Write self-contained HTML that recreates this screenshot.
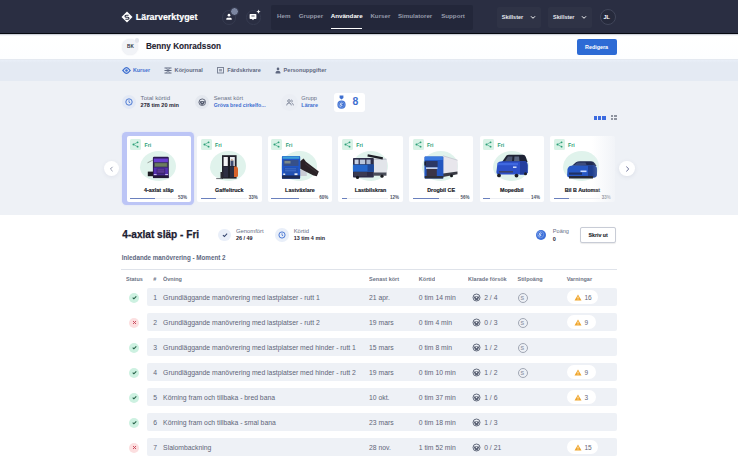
<!DOCTYPE html><html><head><meta charset="utf-8"><style>
*{margin:0;padding:0;box-sizing:border-box}
html,body{width:738px;height:472px;overflow:hidden;background:#fff;font-family:"Liberation Sans",sans-serif}
.ab{position:absolute}
.t{position:absolute;white-space:nowrap;line-height:10px;height:10px}
.b{font-weight:bold}
</style></head><body>
<div class="ab" style="left:0px;top:0px;width:738px;height:33.3px;background:#2a2e42;"></div>
<div class="ab" style="left:0px;top:33px;width:738px;height:1px;background:#070911;"></div>
<svg class="ab" style="left:121px;top:11px" width="12" height="12" viewBox="0 0 12 12"><path d="M6 0.5L11.5 6L6 11.5L0.5 6Z" fill="#fff"/><path d="M7.6 4.3H5.2Q4 4.3 4 5.3T5.2 6.3H6.8Q8 6.3 8 7.3T6.8 8.3H4.4" stroke="#2a2e42" stroke-width="1.1" fill="none"/></svg>
<div class="t b" style="left:135.8px;top:12.20px;font-size:8.9px;color:#fff;-webkit-text-stroke:0.2px #fff">Lärarverktyget</div>
<div class="ab" style="left:221.5px;top:10.2px;width:14.6px;height:14.6px;border-radius:50%;border:1px solid #363b50"></div>
<svg class="ab" style="left:224px;top:12px" width="10" height="10" viewBox="0 0 10 10"><circle cx="5" cy="3.2" r="1.35" fill="#fff"/><path d="M2.3 7.8V6.9Q2.3 5.8 3.6 5.8H6.4Q7.7 5.8 7.7 6.9V7.8Z" fill="#fff"/></svg>
<div class="ab" style="left:230px;top:7px;width:9px;height:9px;border-radius:50%;background:#7b85a0;border:0.6px solid #2a2e42"></div>
<div class="ab" style="left:246.3px;top:10.2px;width:14.6px;height:14.6px;border-radius:50%;border:1px solid #363b50"></div>
<svg class="ab" style="left:248px;top:9px" width="14" height="13" viewBox="0 0 14 13"><path d="M1.6 5.6Q1.6 4.9 2.3 4.9H7.7Q8.4 4.9 8.4 5.6V9.2Q8.4 9.9 7.7 9.9H6L5 11.3 4 9.9H2.3Q1.6 9.9 1.6 9.2Z" fill="#fff"/><path d="M3.4 7h3.2" stroke="#4a4e60" stroke-width="0.9"/><path d="M10.5 0.6Q10.7 2.5 12.6 2.7Q10.7 2.9 10.5 4.8Q10.3 2.9 8.4 2.7Q10.3 2.5 10.5 0.6Z" fill="#fff"/></svg>
<div class="ab" style="left:271px;top:5.4px;width:202.4px;height:24.5px;background:#23273a;border-radius:2px"></div>
<div class="t b" style="left:277px;top:10.80px;font-size:6.2px;color:#969bab;">Hem</div>
<div class="t b" style="left:298.8px;top:10.80px;font-size:6.2px;color:#969bab;">Grupper</div>
<div class="t b" style="left:330.7px;top:10.80px;font-size:6.2px;color:#fff;">Användare</div>
<div class="t b" style="left:370.4px;top:10.80px;font-size:6.2px;color:#969bab;">Kurser</div>
<div class="t b" style="left:397.9px;top:10.80px;font-size:6.2px;color:#969bab;">Simulatorer</div>
<div class="t b" style="left:441.2px;top:10.80px;font-size:6.2px;color:#969bab;">Support</div>
<div class="ab" style="left:330.7px;top:27.8px;width:31.7px;height:1.3px;background:#fff;"></div>
<div class="ab" style="left:496.6px;top:6.6px;width:44.6px;height:21.9px;background:#2f3346;border-radius:2px"></div>
<div class="t b" style="left:501.8px;top:12.20px;font-size:5.5px;color:#e8eaf0;">Skillster</div>
<svg class="ab" style="left:530.1px;top:15px" width="6" height="5" viewBox="0 0 6 5"><path d="M1 1.3L3 3.3L5 1.3" stroke="#fff" stroke-width="1" fill="none"/></svg>
<div class="ab" style="left:547.9px;top:6.6px;width:44.6px;height:21.9px;background:#2f3346;border-radius:2px"></div>
<div class="t b" style="left:553.1px;top:12.20px;font-size:5.5px;color:#e8eaf0;">Skillster</div>
<svg class="ab" style="left:581.4px;top:15px" width="6" height="5" viewBox="0 0 6 5"><path d="M1 1.3L3 3.3L5 1.3" stroke="#fff" stroke-width="1" fill="none"/></svg>
<div class="ab" style="left:600px;top:9px;width:16.2px;height:16.2px;border-radius:50%;border:1px solid #41465a;background:#262a3c"></div>
<div class="t b" style="left:603.4px;top:12.20px;font-size:5.5px;color:#fff;">JL</div>
<div class="ab" style="left:0px;top:34px;width:738px;height:24.6px;background:linear-gradient(180deg,#b9bec8 0,#eef0f4 1.2px,#fff 2.2px,#fdfeff 100%);"></div>
<div class="ab" style="left:122.4px;top:38.6px;width:16px;height:16px;border-radius:50%;background:#f1f3f7;box-shadow:0 0 1.5px rgba(80,90,120,0.15)"></div>
<div class="ab" style="left:134.5px;top:38.3px;width:4.5px;height:4.5px;border-radius:50%;background:#e3e6ec"></div>
<div class="t b" style="left:127.1px;top:42.10px;font-size:4.6px;color:#2e3240;">BK</div>
<div class="t b" style="left:145.9px;top:41.50px;font-size:8.2px;color:#1e2130;-webkit-text-stroke:0.1px #1e2130">Benny Konradsson</div>
<div class="ab" style="left:576.8px;top:38.9px;width:39.8px;height:15.8px;background:#2d6bd5;border-radius:2px"></div>
<div class="t b" style="left:585px;top:41.80px;font-size:5.4px;color:#fff;">Redigera</div>
<div class="ab" style="left:0px;top:58.6px;width:738px;height:22.2px;background:linear-gradient(180deg,#e2e6ed 0,#e8eef7 1.4px,#e4eaf3 4px,#e4eaf3 100%);"></div>
<svg class="ab" style="left:121.8px;top:67px" width="9" height="7" viewBox="0 0 9 7"><path d="M0.8 3.5L3 1.2Q4.5 0.2 6 1.2L8.2 3.5L6 5.8Q4.5 6.8 3 5.8Z" stroke="#3e6fd0" stroke-width="1.2" fill="none"/><circle cx="4.5" cy="3.5" r="1.3" fill="#3e6fd0"/></svg>
<div class="t b" style="left:132.9px;top:65.40px;font-size:5.3px;color:#3e6fd0;">Kurser</div>
<svg class="ab" style="left:164px;top:67.3px" width="8" height="7" viewBox="0 0 8 7"><path d="M0.5 1h7M0.5 3.5h7M0.5 6h7" stroke="#5f6880" stroke-width="1.1"/><path d="M2.5 1.5l3 4M5.5 1.5l-3 4" stroke="#5f6880" stroke-width="0.8"/></svg>
<div class="t b" style="left:174.6px;top:65.40px;font-size:5.6px;color:#5f6880;">Körjournal</div>
<svg class="ab" style="left:217px;top:67.3px" width="7" height="6.5" viewBox="0 0 7 6.5"><rect x="0.5" y="0.5" width="6" height="5.5" stroke="#7d8598" stroke-width="1" fill="none"/><rect x="2" y="2" width="3" height="2.4" fill="#9aa1b1"/></svg>
<div class="t b" style="left:227.3px;top:65.40px;font-size:5.6px;color:#5f6880;">Färdskrivare</div>
<svg class="ab" style="left:274.5px;top:66.8px" width="6" height="7" viewBox="0 0 6 7"><circle cx="3" cy="1.9" r="1.3" fill="#5f6880"/><path d="M0.6 6.6v-1.2q0-1.6 2.4-1.6t2.4 1.6v1.2z" fill="#5f6880"/></svg>
<div class="t b" style="left:283.6px;top:65.40px;font-size:5.56px;color:#5f6880;">Personuppgifter</div>
<div class="ab" style="left:0px;top:80.8px;width:738px;height:134.4px;background:#eef1f6;"></div>
<div class="ab" style="left:121.75px;top:94.85px;width:14.5px;height:14.5px;border-radius:50%;background:#e3e9f5"></div>
<svg class="ab" style="left:125px;top:98.1px" width="8" height="8" viewBox="0 0 8 8"><circle cx="4" cy="4" r="3.2" stroke="#3e6fd0" stroke-width="0.9" fill="none"/><path d="M4 2.2V4.2L5.3 5" stroke="#3e6fd0" stroke-width="0.8" fill="none"/></svg>
<div class="t" style="left:140.6px;top:92.80px;font-size:6.1px;color:#687086;">Total körtid</div>
<div class="t b" style="left:140.6px;top:100.40px;font-size:5.57px;color:#1f2331;">278 tim 20 min</div>
<div class="ab" style="left:194.75px;top:94.85px;width:14.5px;height:14.5px;border-radius:50%;background:#e4e8ef"></div>
<svg class="ab" style="left:197.6px;top:97.9px" width="8.5" height="8.5" viewBox="0 0 9 9"><circle cx="4.5" cy="4.5" r="3.5" stroke="#4f566a" stroke-width="0.9" fill="none"/><path d="M1.4 3.7Q4.5 2.6 7.6 3.7L5.6 6.9Q4.5 7.6 3.4 6.9Z" fill="#4f566a"/><circle cx="4.5" cy="4.6" r="0.75" fill="#e3e7ee"/></svg>
<div class="t" style="left:213.7px;top:92.80px;font-size:5.8px;color:#687086;">Senast kört</div>
<div class="t b" style="left:213.7px;top:100.40px;font-size:5.2px;color:#3e6fd0;">Gröva bred cirkelfo...</div>
<div class="ab" style="left:281.2px;top:93.6px;width:17px;height:17px;border-radius:50%;background:#ebeef4"></div>
<svg class="ab" style="left:285.8px;top:98.6px" width="8" height="7" viewBox="0 0 8 7"><circle cx="3" cy="2" r="1.3" stroke="#6a7288" stroke-width="0.8" fill="none"/><path d="M0.7 6.4q0-2.4 2.3-2.4t2.3 2.4" stroke="#6a7288" stroke-width="0.8" fill="none"/><path d="M5.2 0.9q1.2 0.2 1.2 1.2t-1.2 1.1M6.1 4.1q1.3 0.4 1.3 2.3" stroke="#6a7288" stroke-width="0.7" fill="none"/></svg>
<div class="t" style="left:301.3px;top:93.10px;font-size:5.65px;color:#687086;">Grupp</div>
<div class="t b" style="left:301.3px;top:100.40px;font-size:5.46px;color:#3e6fd0;">Lärare</div>
<div class="ab" style="left:334.1px;top:92.5px;width:31.3px;height:19.3px;background:#fff;border-radius:3px"></div>
<svg class="ab" style="left:337.4px;top:95px" width="9" height="14" viewBox="0 0 9 14"><path d="M2.6 0.4h3.8v2.6l-1.9 1.6-1.9-1.6z" fill="#3e6fd0"/><circle cx="4.5" cy="9.7" r="4.1" fill="#3e6fd0"/><circle cx="4.5" cy="9.7" r="3" stroke="#8fb0ee" stroke-width="0.5" fill="none"/><path d="M5.6 8.6q-1.1-1-2.2 0.1t1.1 1.1q1.2 0.2 0 1.2-1 0.6-2-0.2" stroke="#fff" stroke-width="0.8" fill="none"/></svg>
<div class="t b" style="left:352.6px;top:97.00px;font-size:10.4px;color:#3e6fd0;">8</div>
<div class="ab" style="left:593.5px;top:115.8px;width:3.6px;height:4.1px;background:#3c6be0;"></div>
<div class="ab" style="left:597.8px;top:115.8px;width:3.6px;height:4.1px;background:#3c6be0;"></div>
<div class="ab" style="left:602.1px;top:115.8px;width:3.6px;height:4.1px;background:#3c6be0;"></div>
<div class="ab" style="left:610.5px;top:114.6px;width:2.6px;height:2.5px;background:#8e939f;"></div>
<div class="ab" style="left:610.5px;top:117.89999999999999px;width:2.6px;height:2.5px;background:#8e939f;"></div>
<div class="ab" style="left:614.1px;top:114.6px;width:2.6px;height:2.5px;background:#8e939f;"></div>
<div class="ab" style="left:614.1px;top:117.89999999999999px;width:2.6px;height:2.5px;background:#8e939f;"></div>
<div class="ab" style="left:122.2px;top:132.1px;width:72px;height:73.1px;border-radius:4.5px;background:#bcc5f6;box-shadow:0 0 1.5px rgba(188,197,246,0.6)"></div>
<div class="ab" style="left:126.5px;top:135.6px;width:64.5px;height:66.2px;background:#fff;border-radius:2px"></div>
<div class="ab" style="left:130.1px;top:139.0px;width:11px;height:11.4px;background:#d8f2e6;border-radius:1.5px"></div>
<svg class="ab" style="left:132.1px;top:141.2px" width="7" height="7" viewBox="0 0 7 7"><circle cx="5.6" cy="1.3" r="0.9" fill="#2c9f78"/><circle cx="1.4" cy="3.5" r="0.9" fill="#2c9f78"/><circle cx="5.6" cy="5.7" r="0.9" fill="#2c9f78"/><path d="M5.6 1.3L1.4 3.5L5.6 5.7" stroke="#2c9f78" stroke-width="0.6" fill="none"/></svg>
<div class="t b" style="left:144.5px;top:139.60px;font-size:5.2px;color:#2c9f78;">Fri</div>
<div class="ab" style="left:139.8px;top:151.4px;width:36px;height:30px;border-radius:52% 48% 46% 54% / 55% 50% 50% 45%;background:#e0f3ec"></div>
<svg class="ab" style="left:140px;top:150px" width="36" height="32" viewBox="140 150 36 32">
<path d="M147.5 162.8L152.8 160.2" stroke="#4a4a44" stroke-width="0.5"/>
<rect x="147.8" y="171.6" width="5.2" height="4.6" fill="#1c1a22"/>
<rect x="152.9" y="156.8" width="15.9" height="21.3" rx="1.2" fill="#2b1a52"/>
<rect x="153.8" y="158.5" width="14.1" height="3.8" fill="#6a3fd0"/>
<rect x="154.2" y="162.6" width="13.4" height="4.6" fill="#4d5a5a"/>
<rect x="155" y="163.3" width="11.8" height="3" fill="#6d7d5e"/>
<rect x="153.8" y="167.5" width="14.1" height="7.8" fill="#5530b0"/>
<rect x="156.6" y="168.5" width="8.6" height="6" fill="#3b2470"/>
<rect x="157.4" y="169.6" width="7" height="0.7" fill="#8a5ac8"/>
<rect x="157.4" y="171.6" width="7" height="0.7" fill="#8a5ac8"/>
<rect x="153.8" y="174" width="2.8" height="1.2" fill="#c9b8f0"/>
<rect x="165.2" y="174" width="2.8" height="1.2" fill="#c9b8f0"/>
<rect x="153.2" y="175.6" width="15.4" height="2.5" fill="#231a36"/>
</svg>
<div class="t b" style="left:126.5px;width:64.5px;text-align:center;top:185.4px;font-size:5.4px;color:#15171f;-webkit-text-stroke:0.15px #15171f">4-axlat släp</div>
<div class="ab" style="left:130.1px;top:197.6px;width:46.5px;height:1.2px;background:#eceef3;"></div>
<div class="ab" style="left:130.1px;top:197.6px;width:24.645px;height:1.2px;background:#6a80bd;"></div>
<div class="t b" style="left:178.1px;top:193.20px;font-size:4.5px;color:#4d5466;">53%</div>
<div class="ab" style="left:197.1px;top:135.6px;width:64.5px;height:66.2px;background:#fff;border-radius:2px"></div>
<div class="ab" style="left:200.7px;top:139.0px;width:11px;height:11.4px;background:#d8f2e6;border-radius:1.5px"></div>
<svg class="ab" style="left:202.7px;top:141.2px" width="7" height="7" viewBox="0 0 7 7"><circle cx="5.6" cy="1.3" r="0.9" fill="#2c9f78"/><circle cx="1.4" cy="3.5" r="0.9" fill="#2c9f78"/><circle cx="5.6" cy="5.7" r="0.9" fill="#2c9f78"/><path d="M5.6 1.3L1.4 3.5L5.6 5.7" stroke="#2c9f78" stroke-width="0.6" fill="none"/></svg>
<div class="t b" style="left:215.1px;top:139.60px;font-size:5.2px;color:#2c9f78;">Fri</div>
<div class="ab" style="left:210.4px;top:151.4px;width:36px;height:30px;border-radius:52% 48% 46% 54% / 55% 50% 50% 45%;background:#e0f3ec"></div>
<svg class="ab" style="left:210px;top:150px" width="36" height="32" viewBox="210 150 36 32">
<path d="M216.2 178.6H223" stroke="#4d4f58" stroke-width="0.8"/>
<rect x="222" y="155.2" width="14.6" height="23.4" fill="#22222c"/>
<rect x="223.6" y="157" width="4.2" height="9" fill="#f3f4f6"/>
<rect x="230" y="157" width="4.8" height="9" fill="#e9ecf0"/>
<rect x="230.5" y="160.5" width="3" height="5.5" fill="#3d4a70"/>
<rect x="231" y="159" width="1.8" height="1.8" rx="0.9" fill="#c7a58a"/>
<rect x="223.4" y="166.6" width="11" height="10.6" fill="#2c2e42"/>
<rect x="228.2" y="156" width="1.6" height="22" fill="#1a1b22"/>
<path d="M234 166.5H236.5Q238 167 238 169V175.5Q238 177 236.5 177H234Z" fill="#d8642c"/>
<rect x="220.5" y="172" width="2" height="6.4" fill="#2a2b33"/>
</svg>
<div class="t b" style="left:197.1px;width:64.5px;text-align:center;top:185.4px;font-size:5.4px;color:#15171f;-webkit-text-stroke:0.15px #15171f">Gaffeltruck</div>
<div class="ab" style="left:200.7px;top:197.6px;width:46.5px;height:1.2px;background:#eceef3;"></div>
<div class="ab" style="left:200.7px;top:197.6px;width:15.345px;height:1.2px;background:#6a80bd;"></div>
<div class="t b" style="left:248.7px;top:193.20px;font-size:4.5px;color:#4d5466;">33%</div>
<div class="ab" style="left:267.7px;top:135.6px;width:64.5px;height:66.2px;background:#fff;border-radius:2px"></div>
<div class="ab" style="left:271.3px;top:139.0px;width:11px;height:11.4px;background:#d8f2e6;border-radius:1.5px"></div>
<svg class="ab" style="left:273.3px;top:141.2px" width="7" height="7" viewBox="0 0 7 7"><circle cx="5.6" cy="1.3" r="0.9" fill="#2c9f78"/><circle cx="1.4" cy="3.5" r="0.9" fill="#2c9f78"/><circle cx="5.6" cy="5.7" r="0.9" fill="#2c9f78"/><path d="M5.6 1.3L1.4 3.5L5.6 5.7" stroke="#2c9f78" stroke-width="0.6" fill="none"/></svg>
<div class="t b" style="left:285.7px;top:139.60px;font-size:5.2px;color:#2c9f78;">Fri</div>
<div class="ab" style="left:281.0px;top:151.4px;width:36px;height:30px;border-radius:52% 48% 46% 54% / 55% 50% 50% 45%;background:#e0f3ec"></div>
<svg class="ab" style="left:278px;top:150px" width="44" height="32" viewBox="278 150 44 32">
<rect x="299.8" y="170" width="7" height="6" fill="#c9ccd4"/>
<path d="M300.2 161.2L303.6 158.4L306 161.8L318.8 171.4L316.8 176.2L313.5 175.6L300.2 168.8Z" fill="#2a2226"/>
<path d="M305 163.5L317 172.5" stroke="#4a4246" stroke-width="0.5"/>
<rect x="281.9" y="156.1" width="18.3" height="22.6" rx="1" fill="#1f56c8"/>
<rect x="282.6" y="156.4" width="16.8" height="2.4" fill="#3fa0d8"/>
<rect x="283.5" y="160" width="15" height="6" fill="#36508a"/>
<rect x="284.5" y="161" width="6" height="2.5" fill="#7c8a8a"/>
<rect x="284" y="167.3" width="14" height="7.2" fill="#2352b0"/>
<rect x="285" y="168.5" width="11" height="0.7" fill="#4f7bd0"/>
<rect x="285" y="170.5" width="11" height="0.7" fill="#4f7bd0"/>
<rect x="282" y="175.4" width="18" height="3.3" fill="#1d2a52"/>
<rect x="294.5" y="173.3" width="3" height="1.8" fill="#e9eef8"/>
<rect x="283.2" y="173.5" width="2" height="1.5" fill="#e9eef8"/>
</svg>
<div class="t b" style="left:267.7px;width:64.5px;text-align:center;top:185.4px;font-size:5.4px;color:#15171f;-webkit-text-stroke:0.15px #15171f">Lastväxlare</div>
<div class="ab" style="left:271.3px;top:197.6px;width:46.5px;height:1.2px;background:#eceef3;"></div>
<div class="ab" style="left:271.3px;top:197.6px;width:27.9px;height:1.2px;background:#6a80bd;"></div>
<div class="t b" style="left:319.3px;top:193.20px;font-size:4.5px;color:#4d5466;">60%</div>
<div class="ab" style="left:338.29999999999995px;top:135.6px;width:64.5px;height:66.2px;background:#fff;border-radius:2px"></div>
<div class="ab" style="left:341.9px;top:139.0px;width:11px;height:11.4px;background:#d8f2e6;border-radius:1.5px"></div>
<svg class="ab" style="left:343.9px;top:141.2px" width="7" height="7" viewBox="0 0 7 7"><circle cx="5.6" cy="1.3" r="0.9" fill="#2c9f78"/><circle cx="1.4" cy="3.5" r="0.9" fill="#2c9f78"/><circle cx="5.6" cy="5.7" r="0.9" fill="#2c9f78"/><path d="M5.6 1.3L1.4 3.5L5.6 5.7" stroke="#2c9f78" stroke-width="0.6" fill="none"/></svg>
<div class="t b" style="left:356.29999999999995px;top:139.60px;font-size:5.2px;color:#2c9f78;">Fri</div>
<div class="ab" style="left:351.59999999999997px;top:151.4px;width:36px;height:30px;border-radius:52% 48% 46% 54% / 55% 50% 50% 45%;background:#e0f3ec"></div>
<svg class="ab" style="left:350px;top:150px" width="40" height="32" viewBox="350 150 40 32">
<path d="M373.5 158.5H386Q387 159 387 160.5V173H373.5Z" fill="#e2e5ea"/>
<path d="M373.5 159.2H386.5" stroke="#9aa0ac" stroke-width="0.6"/>
<rect x="373.5" y="172.5" width="13" height="3.2" fill="#4a4e5a"/>
<circle cx="382" cy="176.2" r="1.6" fill="#1a1b20"/>
<path d="M367.6 155.4L382.8 158.4" stroke="#1d1f26" stroke-width="2.1"/>
<rect x="353" y="158.1" width="20.8" height="19.4" rx="0.8" fill="#2c2d48"/>
<rect x="354.6" y="159.6" width="4" height="4.6" fill="#c8d2e4"/>
<rect x="359.8" y="159.6" width="5.4" height="4.6" fill="#b9c5dc"/>
<rect x="366.4" y="159.6" width="4.2" height="4.6" fill="#aab6d0"/>
<rect x="353" y="164.6" width="20.8" height="7.1" fill="#2668cc"/>
<rect x="367.5" y="164.6" width="6.3" height="7.1" fill="#1f4a9a"/>
<rect x="354" y="172" width="13" height="4" fill="#3a3b52"/>
<circle cx="357.5" cy="177.4" r="1.6" fill="#17181d"/>
</svg>
<div class="t b" style="left:338.29999999999995px;width:64.5px;text-align:center;top:185.4px;font-size:5.4px;color:#15171f;-webkit-text-stroke:0.15px #15171f">Lastbilskran</div>
<div class="ab" style="left:341.9px;top:197.6px;width:46.5px;height:1.2px;background:#eceef3;"></div>
<div class="ab" style="left:341.9px;top:197.6px;width:5.58px;height:1.2px;background:#6a80bd;"></div>
<div class="t b" style="left:389.9px;top:193.20px;font-size:4.5px;color:#4d5466;">12%</div>
<div class="ab" style="left:408.9px;top:135.6px;width:64.5px;height:66.2px;background:#fff;border-radius:2px"></div>
<div class="ab" style="left:412.5px;top:139.0px;width:11px;height:11.4px;background:#d8f2e6;border-radius:1.5px"></div>
<svg class="ab" style="left:414.5px;top:141.2px" width="7" height="7" viewBox="0 0 7 7"><circle cx="5.6" cy="1.3" r="0.9" fill="#2c9f78"/><circle cx="1.4" cy="3.5" r="0.9" fill="#2c9f78"/><circle cx="5.6" cy="5.7" r="0.9" fill="#2c9f78"/><path d="M5.6 1.3L1.4 3.5L5.6 5.7" stroke="#2c9f78" stroke-width="0.6" fill="none"/></svg>
<div class="t b" style="left:426.9px;top:139.60px;font-size:5.2px;color:#2c9f78;">Fri</div>
<div class="ab" style="left:422.2px;top:151.4px;width:36px;height:30px;border-radius:52% 48% 46% 54% / 55% 50% 50% 45%;background:#e0f3ec"></div>
<svg class="ab" style="left:420px;top:150px" width="42" height="32" viewBox="420 150 42 32">
<path d="M443 155.6L457.5 160V171.6L443 173.6Z" fill="#e8e6ec"/>
<path d="M443 155.8L457.5 160.2" stroke="#bfc3cd" stroke-width="0.7"/>
<path d="M443 173.6L457.5 171.6V174.3L443 177Z" fill="#3a3b45"/>
<circle cx="451.5" cy="175.8" r="1.5" fill="#16171c"/>
<rect x="424.4" y="156.4" width="19" height="22.1" rx="1" fill="#2356c0"/>
<rect x="425" y="156.6" width="17.8" height="3.4" fill="#3a7ae0"/>
<rect x="425.6" y="161" width="12" height="6" fill="#2c3764"/>
<rect x="426" y="167.4" width="11.5" height="1.5" fill="#d8dce8"/>
<rect x="426.6" y="169" width="10.2" height="7" fill="#3a3446"/>
<rect x="424.8" y="176" width="18.4" height="2.5" fill="#2c2f3a"/>
<rect x="424.4" y="161.5" width="1.6" height="4" fill="#1c2230"/>
</svg>
<div class="t b" style="left:408.9px;width:64.5px;text-align:center;top:185.4px;font-size:5.4px;color:#15171f;-webkit-text-stroke:0.15px #15171f">Drogbil CE</div>
<div class="ab" style="left:412.5px;top:197.6px;width:46.5px;height:1.2px;background:#eceef3;"></div>
<div class="ab" style="left:412.5px;top:197.6px;width:26.040000000000003px;height:1.2px;background:#6a80bd;"></div>
<div class="t b" style="left:460.5px;top:193.20px;font-size:4.5px;color:#4d5466;">56%</div>
<div class="ab" style="left:479.5px;top:135.6px;width:64.5px;height:66.2px;background:#fff;border-radius:2px"></div>
<div class="ab" style="left:483.1px;top:139.0px;width:11px;height:11.4px;background:#d8f2e6;border-radius:1.5px"></div>
<svg class="ab" style="left:485.1px;top:141.2px" width="7" height="7" viewBox="0 0 7 7"><circle cx="5.6" cy="1.3" r="0.9" fill="#2c9f78"/><circle cx="1.4" cy="3.5" r="0.9" fill="#2c9f78"/><circle cx="5.6" cy="5.7" r="0.9" fill="#2c9f78"/><path d="M5.6 1.3L1.4 3.5L5.6 5.7" stroke="#2c9f78" stroke-width="0.6" fill="none"/></svg>
<div class="t b" style="left:497.5px;top:139.60px;font-size:5.2px;color:#2c9f78;">Fri</div>
<div class="ab" style="left:492.8px;top:151.4px;width:36px;height:30px;border-radius:52% 48% 46% 54% / 55% 50% 50% 45%;background:#e0f3ec"></div>
<svg class="ab" style="left:492px;top:150px" width="40" height="32" viewBox="492 150 40 32">
<path d="M502 162L506.5 155.6Q507.3 154.7 509 154.7H523Q525 154.7 525.8 157L527.5 162Z" fill="#1f2335"/>
<path d="M505 161.2L508 156.6H512.5L512 161.2Z" fill="#4a5570"/>
<path d="M514 161.2L514.5 156.6H519L519.5 161.2Z" fill="#5a6680"/>
<path d="M497.5 163Q499 161.3 502 161.3H525.5Q527.6 162 527.6 165V172.5Q527.3 174.5 525 174.5H499Q496.4 174.5 496.4 172Z" fill="#2c50c8"/>
<path d="M520 161.5H525.5Q527.6 162 527.6 165V172.5Q527.3 174.5 525 174.5H520Z" fill="#233f9e"/>
<rect x="498" y="163" width="20" height="2.2" fill="#3f68e0"/>
<rect x="513" y="166.5" width="3.5" height="1.4" fill="#dfe8ff"/>
<rect x="499" y="171" width="14" height="1.6" fill="#3c4468"/>
<circle cx="499" cy="175.4" r="1.9" fill="#1d1f27"/>
<circle cx="516.5" cy="175.6" r="1.9" fill="#1d1f27"/>
<circle cx="525.5" cy="173.8" r="1.5" fill="#1d1f27"/>
</svg>
<div class="t b" style="left:479.5px;width:64.5px;text-align:center;top:185.4px;font-size:5.4px;color:#15171f;-webkit-text-stroke:0.15px #15171f">Mopedbil</div>
<div class="ab" style="left:483.1px;top:197.6px;width:46.5px;height:1.2px;background:#eceef3;"></div>
<div class="ab" style="left:483.1px;top:197.6px;width:6.510000000000001px;height:1.2px;background:#6a80bd;"></div>
<div class="t b" style="left:531.1px;top:193.20px;font-size:4.5px;color:#4d5466;">14%</div>
<div class="ab" style="left:550.0999999999999px;top:135.6px;width:64.5px;height:66.2px;background:#fff;border-radius:2px"></div>
<div class="ab" style="left:553.6999999999999px;top:139.0px;width:11px;height:11.4px;background:#d8f2e6;border-radius:1.5px"></div>
<svg class="ab" style="left:555.6999999999999px;top:141.2px" width="7" height="7" viewBox="0 0 7 7"><circle cx="5.6" cy="1.3" r="0.9" fill="#2c9f78"/><circle cx="1.4" cy="3.5" r="0.9" fill="#2c9f78"/><circle cx="5.6" cy="5.7" r="0.9" fill="#2c9f78"/><path d="M5.6 1.3L1.4 3.5L5.6 5.7" stroke="#2c9f78" stroke-width="0.6" fill="none"/></svg>
<div class="t b" style="left:568.0999999999999px;top:139.60px;font-size:5.2px;color:#2c9f78;">Fri</div>
<div class="ab" style="left:563.3999999999999px;top:151.4px;width:36px;height:30px;border-radius:52% 48% 46% 54% / 55% 50% 50% 45%;background:#e0f3ec"></div>
<svg class="ab" style="left:562px;top:150px" width="40" height="32" viewBox="562 150 40 32">
<path d="M572 165.8L576 162.2Q577.5 161.2 580 161.2H591Q593.6 161.2 595 163.5L596.5 166Z" fill="#1f2a52"/>
<path d="M574.5 165L577.2 162.4H585.5L586.6 165Z" fill="#3d4c7c"/>
<path d="M567.5 169Q568.5 165.6 573 165.6H594Q596.9 166.2 596.9 169.5V175Q596.6 177.5 594 177.5H570Q567.1 177.5 567.1 175Z" fill="#2758c4"/>
<path d="M588 165.8H594Q596.9 166.2 596.9 169.5V175Q596.6 177.5 594 177.5H588Z" fill="#1f3f90"/>
<rect x="580.5" y="170.5" width="6" height="1.6" fill="#c9dcff"/>
<rect x="569" y="172.5" width="13" height="2.2" fill="#1f3266"/>
<rect x="569" y="176" width="24" height="2.5" fill="#272a36"/>
</svg>
<div class="t b" style="left:550.0999999999999px;width:64.5px;text-align:center;top:185.4px;font-size:5.4px;color:#15171f;-webkit-text-stroke:0.15px #15171f">Bil B Automat</div>
<div class="ab" style="left:553.6999999999999px;top:197.6px;width:46.5px;height:1.2px;background:#eceef3;"></div>
<div class="ab" style="left:553.6999999999999px;top:197.6px;width:15.345px;height:1.2px;background:#6a80bd;"></div>
<div class="t b" style="left:601.6999999999999px;top:193.20px;font-size:4.5px;color:#4d5466;">33%</div>
<div class="ab" style="left:104px;top:161px;width:15.4px;height:15.4px;border-radius:50%;background:#fff;box-shadow:0 1px 4px rgba(60,70,110,0.08)"></div>
<svg class="ab" style="left:109.2px;top:165.7px" width="5" height="6" viewBox="0 0 5 6"><path d="M3.6 0.8L1.4 3L3.6 5.2" stroke="#8a8fa6" stroke-width="0.9" fill="none"/></svg>
<div class="ab" style="left:592px;top:130px;width:30px;height:80px;background:linear-gradient(90deg,rgba(238,241,246,0),rgba(238,241,246,0.75) 70%,#eef1f6)"></div>
<div class="ab" style="left:619.2px;top:160.8px;width:15.6px;height:15.6px;border-radius:50%;background:#fff;box-shadow:0 1px 4px rgba(60,70,110,0.10)"></div>
<svg class="ab" style="left:624.5px;top:165.6px" width="5" height="6" viewBox="0 0 5 6"><path d="M1.3 0.6L3.8 3L1.3 5.4" stroke="#6a6f96" stroke-width="1" fill="none"/></svg>
<div class="t b" style="left:122.3px;top:230.40px;font-size:10.1px;color:#1d2030;-webkit-text-stroke:0.25px #1d2030">4-axlat släp - Fri</div>
<div class="ab" style="left:218.3px;top:228.8px;width:12.4px;height:12.4px;border-radius:50%;background:#e9eff9"></div>
<svg class="ab" style="left:221.5px;top:232px" width="6" height="6" viewBox="0 0 6 6"><path d="M0.9 3.1L2.4 4.5L5.1 1.6" stroke="#34456e" stroke-width="1.05" fill="none"/></svg>
<div class="t" style="left:236px;top:226.00px;font-size:5.86px;color:#687086;">Genomfört</div>
<div class="t b" style="left:236px;top:233.30px;font-size:5.42px;color:#1f2331;">26 / 49</div>
<div class="ab" style="left:275.2px;top:228.2px;width:13.6px;height:13.6px;border-radius:50%;background:#e9eff9"></div>
<svg class="ab" style="left:278px;top:231px" width="8" height="8" viewBox="0 0 8 8"><circle cx="4" cy="4" r="3.1" stroke="#3e6fd0" stroke-width="0.9" fill="none"/><path d="M4 2.3V4.2L5.2 5" stroke="#3e6fd0" stroke-width="0.8" fill="none"/></svg>
<div class="t" style="left:293.7px;top:226.00px;font-size:5.9px;color:#687086;">Körtid</div>
<div class="t b" style="left:293.7px;top:233.30px;font-size:5.43px;color:#1f2331;">13 tim 4 min</div>
<div class="ab" style="left:535.6px;top:229.8px;width:10.2px;height:10.2px;border-radius:50%;background:#3d6fd8"></div>
<svg class="ab" style="left:536.2px;top:230.4px" width="9" height="9" viewBox="0 0 9 9"><circle cx="4.5" cy="4.5" r="3.2" stroke="#9dbaf0" stroke-width="0.5" fill="none"/><path d="M5.6 3.4q-1.1-1-2.2 0.1t1.1 1.1q1.2 0.2 0 1.2-1 0.6-2-0.2" stroke="#fff" stroke-width="0.8" fill="none"/></svg>
<div class="t" style="left:552.8px;top:226.20px;font-size:5.6px;color:#687086;">Poäng</div>
<div class="t b" style="left:552.8px;top:233.50px;font-size:5.5px;color:#1f2331;">0</div>
<div class="ab" style="left:579.9px;top:227.4px;width:36.6px;height:15.6px;border-radius:2px;background:#fff;border:0.8px solid #c8ccd6;box-shadow:0 0.5px 1px rgba(0,0,0,0.08)"></div>
<div class="t b" style="left:588.4px;top:230.20px;font-size:5.32px;color:#1c1f2b;-webkit-text-stroke:0.12px #1c1f2b">Skriv ut</div>
<div class="t b" style="left:121.8px;top:252.80px;font-size:6.27px;color:#5d6780;">Inledande manövrering - Moment 2</div>
<div class="ab" style="left:120.7px;top:269px;width:496px;height:0.9px;background:#dfe3ea;"></div>
<div class="t b" style="left:126px;top:273.90px;font-size:5.5px;color:#61687a;opacity:0.92">Status</div>
<div class="t b" style="left:153.2px;top:273.90px;font-size:5.5px;color:#61687a;opacity:0.92">#</div>
<div class="t b" style="left:163px;top:273.90px;font-size:5.5px;color:#61687a;opacity:0.92">Övning</div>
<div class="t b" style="left:369.1px;top:273.90px;font-size:5.5px;color:#61687a;opacity:0.92">Senast kört</div>
<div class="t b" style="left:418.8px;top:273.90px;font-size:5.5px;color:#61687a;opacity:0.92">Körtid</div>
<div class="t b" style="left:468.1px;top:273.90px;font-size:5.5px;color:#61687a;opacity:0.92">Klarade försök</div>
<div class="t b" style="left:517.6px;top:273.90px;font-size:5.5px;color:#61687a;opacity:0.92">Stilpoäng</div>
<div class="t b" style="left:566.7px;top:273.90px;font-size:5.5px;color:#61687a;opacity:0.92">Varningar</div>
<div class="ab" style="left:146.7px;top:288.2px;width:470px;height:17.5px;background:#eef1f6;border-radius:2px"></div>
<div class="ab" style="left:129.3px;top:292.49999999999994px;width:10.2px;height:10.2px;border-radius:50%;background:#cdf1e1"></div>
<svg class="ab" style="left:131.9px;top:295.09999999999997px" width="5" height="5" viewBox="0 0 5 5"><path d="M0.7 2.6L1.9 3.8L4.3 1.3" stroke="#215c43" stroke-width="1.05" fill="none"/></svg>
<div class="t" style="left:153.3px;top:292.60px;font-size:6.8px;color:#5f6679;">1</div>
<div class="t" style="left:163.1px;top:292.60px;font-size:6.83px;color:#5f6679;">Grundläggande manövrering med lastplatser - rutt 1</div>
<div class="t" style="left:369.1px;top:292.60px;font-size:6.8px;color:#5f6679;">21 apr.</div>
<div class="t" style="left:418.8px;top:292.60px;font-size:6.8px;color:#5f6679;">0 tim 14 min</div>
<svg class="ab" style="left:471.6px;top:293.09999999999997px" width="9" height="9" viewBox="0 0 9 9"><circle cx="4.5" cy="4.5" r="3.5" stroke="#565d70" stroke-width="0.9" fill="none"/><path d="M1.4 3.7Q4.5 2.6 7.6 3.7L5.6 6.9Q4.5 7.6 3.4 6.9Z" fill="#565d70"/><circle cx="4.5" cy="4.6" r="0.75" fill="#eef1f6"/></svg>
<div class="t" style="left:484.2px;top:292.60px;font-size:6.8px;color:#5f6679;">2 / 4</div>
<div class="ab" style="left:517.7px;top:292.59999999999997px;width:10px;height:10px;border-radius:50%;border:0.9px solid #a0a6b3"></div>
<div class="t b" style="left:520.6px;top:292.60px;font-size:5.4px;color:#959bab;">S</div>
<div class="ab" style="left:567.1px;top:290.2px;width:31px;height:13.8px;border-radius:7px;background:#fff"></div>
<svg class="ab" style="left:574px;top:293.79999999999995px" width="8" height="7" viewBox="0 0 8 7"><path d="M4 0.6L7.5 6.5H0.5Z" fill="#f0a52a"/><path d="M4 2.6v2" stroke="#fff" stroke-width="0.8"/><circle cx="4" cy="5.5" r="0.4" fill="#fff"/></svg>
<div class="t" style="left:584.4px;top:292.60px;font-size:6.5px;color:#5f6679;">16</div>
<div class="ab" style="left:146.7px;top:313.2px;width:470px;height:17.5px;background:#eef1f6;border-radius:2px"></div>
<div class="ab" style="left:129.3px;top:317.49999999999994px;width:10.2px;height:10.2px;border-radius:50%;background:#fcdfe0"></div>
<svg class="ab" style="left:131.9px;top:320.09999999999997px" width="5" height="5" viewBox="0 0 5 5"><path d="M1 1L4 4M4 1L1 4" stroke="#c84459" stroke-width="0.95" fill="none"/></svg>
<div class="t" style="left:153.3px;top:317.60px;font-size:6.8px;color:#5f6679;">2</div>
<div class="t" style="left:163.1px;top:317.60px;font-size:6.83px;color:#5f6679;">Grundläggande manövrering med lastplatser - rutt 2</div>
<div class="t" style="left:369.1px;top:317.60px;font-size:6.8px;color:#5f6679;">19 mars</div>
<div class="t" style="left:418.8px;top:317.60px;font-size:6.8px;color:#5f6679;">0 tim 4 min</div>
<svg class="ab" style="left:471.6px;top:318.09999999999997px" width="9" height="9" viewBox="0 0 9 9"><circle cx="4.5" cy="4.5" r="3.5" stroke="#565d70" stroke-width="0.9" fill="none"/><path d="M1.4 3.7Q4.5 2.6 7.6 3.7L5.6 6.9Q4.5 7.6 3.4 6.9Z" fill="#565d70"/><circle cx="4.5" cy="4.6" r="0.75" fill="#eef1f6"/></svg>
<div class="t" style="left:484.2px;top:317.60px;font-size:6.8px;color:#5f6679;">0 / 3</div>
<div class="ab" style="left:517.7px;top:317.59999999999997px;width:10px;height:10px;border-radius:50%;border:0.9px solid #a0a6b3"></div>
<div class="t b" style="left:520.6px;top:317.60px;font-size:5.4px;color:#959bab;">S</div>
<div class="ab" style="left:567.1px;top:315.2px;width:28.6px;height:13.8px;border-radius:7px;background:#fff"></div>
<svg class="ab" style="left:574px;top:318.79999999999995px" width="8" height="7" viewBox="0 0 8 7"><path d="M4 0.6L7.5 6.5H0.5Z" fill="#f0a52a"/><path d="M4 2.6v2" stroke="#fff" stroke-width="0.8"/><circle cx="4" cy="5.5" r="0.4" fill="#fff"/></svg>
<div class="t" style="left:584.4px;top:317.60px;font-size:6.5px;color:#5f6679;">9</div>
<div class="ab" style="left:146.7px;top:338.2px;width:470px;height:17.5px;background:#eef1f6;border-radius:2px"></div>
<div class="ab" style="left:129.3px;top:342.49999999999994px;width:10.2px;height:10.2px;border-radius:50%;background:#cdf1e1"></div>
<svg class="ab" style="left:131.9px;top:345.09999999999997px" width="5" height="5" viewBox="0 0 5 5"><path d="M0.7 2.6L1.9 3.8L4.3 1.3" stroke="#215c43" stroke-width="1.05" fill="none"/></svg>
<div class="t" style="left:153.3px;top:342.60px;font-size:6.8px;color:#5f6679;">3</div>
<div class="t" style="left:163.1px;top:342.60px;font-size:6.83px;color:#5f6679;">Grundläggande manövrering med lastplatser med hinder - rutt 1</div>
<div class="t" style="left:369.1px;top:342.60px;font-size:6.8px;color:#5f6679;">15 mars</div>
<div class="t" style="left:418.8px;top:342.60px;font-size:6.8px;color:#5f6679;">0 tim 8 min</div>
<svg class="ab" style="left:471.6px;top:343.09999999999997px" width="9" height="9" viewBox="0 0 9 9"><circle cx="4.5" cy="4.5" r="3.5" stroke="#565d70" stroke-width="0.9" fill="none"/><path d="M1.4 3.7Q4.5 2.6 7.6 3.7L5.6 6.9Q4.5 7.6 3.4 6.9Z" fill="#565d70"/><circle cx="4.5" cy="4.6" r="0.75" fill="#eef1f6"/></svg>
<div class="t" style="left:484.2px;top:342.60px;font-size:6.8px;color:#5f6679;">1 / 2</div>
<div class="ab" style="left:517.7px;top:342.59999999999997px;width:10px;height:10px;border-radius:50%;border:0.9px solid #a0a6b3"></div>
<div class="t b" style="left:520.6px;top:342.60px;font-size:5.4px;color:#959bab;">S</div>
<div class="ab" style="left:146.7px;top:363.2px;width:470px;height:17.5px;background:#eef1f6;border-radius:2px"></div>
<div class="ab" style="left:129.3px;top:367.49999999999994px;width:10.2px;height:10.2px;border-radius:50%;background:#cdf1e1"></div>
<svg class="ab" style="left:131.9px;top:370.09999999999997px" width="5" height="5" viewBox="0 0 5 5"><path d="M0.7 2.6L1.9 3.8L4.3 1.3" stroke="#215c43" stroke-width="1.05" fill="none"/></svg>
<div class="t" style="left:153.3px;top:367.60px;font-size:6.8px;color:#5f6679;">4</div>
<div class="t" style="left:163.1px;top:367.60px;font-size:6.83px;color:#5f6679;">Grundläggande manövrering med lastplatser med hinder - rutt 2</div>
<div class="t" style="left:369.1px;top:367.60px;font-size:6.8px;color:#5f6679;">19 mars</div>
<div class="t" style="left:418.8px;top:367.60px;font-size:6.8px;color:#5f6679;">0 tim 10 min</div>
<svg class="ab" style="left:471.6px;top:368.09999999999997px" width="9" height="9" viewBox="0 0 9 9"><circle cx="4.5" cy="4.5" r="3.5" stroke="#565d70" stroke-width="0.9" fill="none"/><path d="M1.4 3.7Q4.5 2.6 7.6 3.7L5.6 6.9Q4.5 7.6 3.4 6.9Z" fill="#565d70"/><circle cx="4.5" cy="4.6" r="0.75" fill="#eef1f6"/></svg>
<div class="t" style="left:484.2px;top:367.60px;font-size:6.8px;color:#5f6679;">1 / 2</div>
<div class="ab" style="left:517.7px;top:367.59999999999997px;width:10px;height:10px;border-radius:50%;border:0.9px solid #a0a6b3"></div>
<div class="t b" style="left:520.6px;top:367.60px;font-size:5.4px;color:#959bab;">S</div>
<div class="ab" style="left:567.1px;top:365.2px;width:28.6px;height:13.8px;border-radius:7px;background:#fff"></div>
<svg class="ab" style="left:574px;top:368.79999999999995px" width="8" height="7" viewBox="0 0 8 7"><path d="M4 0.6L7.5 6.5H0.5Z" fill="#f0a52a"/><path d="M4 2.6v2" stroke="#fff" stroke-width="0.8"/><circle cx="4" cy="5.5" r="0.4" fill="#fff"/></svg>
<div class="t" style="left:584.4px;top:367.60px;font-size:6.5px;color:#5f6679;">9</div>
<div class="ab" style="left:146.7px;top:388.2px;width:470px;height:17.5px;background:#eef1f6;border-radius:2px"></div>
<div class="ab" style="left:129.3px;top:392.49999999999994px;width:10.2px;height:10.2px;border-radius:50%;background:#cdf1e1"></div>
<svg class="ab" style="left:131.9px;top:395.09999999999997px" width="5" height="5" viewBox="0 0 5 5"><path d="M0.7 2.6L1.9 3.8L4.3 1.3" stroke="#215c43" stroke-width="1.05" fill="none"/></svg>
<div class="t" style="left:153.3px;top:392.60px;font-size:6.8px;color:#5f6679;">5</div>
<div class="t" style="left:163.1px;top:392.60px;font-size:6.83px;color:#5f6679;">Körning fram och tillbaka - bred bana</div>
<div class="t" style="left:369.1px;top:392.60px;font-size:6.8px;color:#5f6679;">10 okt.</div>
<div class="t" style="left:418.8px;top:392.60px;font-size:6.8px;color:#5f6679;">0 tim 37 min</div>
<svg class="ab" style="left:471.6px;top:393.09999999999997px" width="9" height="9" viewBox="0 0 9 9"><circle cx="4.5" cy="4.5" r="3.5" stroke="#565d70" stroke-width="0.9" fill="none"/><path d="M1.4 3.7Q4.5 2.6 7.6 3.7L5.6 6.9Q4.5 7.6 3.4 6.9Z" fill="#565d70"/><circle cx="4.5" cy="4.6" r="0.75" fill="#eef1f6"/></svg>
<div class="t" style="left:484.2px;top:392.60px;font-size:6.8px;color:#5f6679;">1 / 6</div>
<div class="ab" style="left:567.1px;top:390.2px;width:28.6px;height:13.8px;border-radius:7px;background:#fff"></div>
<svg class="ab" style="left:574px;top:393.79999999999995px" width="8" height="7" viewBox="0 0 8 7"><path d="M4 0.6L7.5 6.5H0.5Z" fill="#f0a52a"/><path d="M4 2.6v2" stroke="#fff" stroke-width="0.8"/><circle cx="4" cy="5.5" r="0.4" fill="#fff"/></svg>
<div class="t" style="left:584.4px;top:392.60px;font-size:6.5px;color:#5f6679;">3</div>
<div class="ab" style="left:146.7px;top:413.2px;width:470px;height:17.5px;background:#eef1f6;border-radius:2px"></div>
<div class="ab" style="left:129.3px;top:417.49999999999994px;width:10.2px;height:10.2px;border-radius:50%;background:#cdf1e1"></div>
<svg class="ab" style="left:131.9px;top:420.09999999999997px" width="5" height="5" viewBox="0 0 5 5"><path d="M0.7 2.6L1.9 3.8L4.3 1.3" stroke="#215c43" stroke-width="1.05" fill="none"/></svg>
<div class="t" style="left:153.3px;top:417.60px;font-size:6.8px;color:#5f6679;">6</div>
<div class="t" style="left:163.1px;top:417.60px;font-size:6.83px;color:#5f6679;">Körning fram och tillbaka - smal bana</div>
<div class="t" style="left:369.1px;top:417.60px;font-size:6.8px;color:#5f6679;">23 mars</div>
<div class="t" style="left:418.8px;top:417.60px;font-size:6.8px;color:#5f6679;">0 tim 18 min</div>
<svg class="ab" style="left:471.6px;top:418.09999999999997px" width="9" height="9" viewBox="0 0 9 9"><circle cx="4.5" cy="4.5" r="3.5" stroke="#565d70" stroke-width="0.9" fill="none"/><path d="M1.4 3.7Q4.5 2.6 7.6 3.7L5.6 6.9Q4.5 7.6 3.4 6.9Z" fill="#565d70"/><circle cx="4.5" cy="4.6" r="0.75" fill="#eef1f6"/></svg>
<div class="t" style="left:484.2px;top:417.60px;font-size:6.8px;color:#5f6679;">1 / 3</div>
<div class="ab" style="left:146.7px;top:438.2px;width:470px;height:17.5px;background:#eef1f6;border-radius:2px"></div>
<div class="ab" style="left:129.3px;top:442.49999999999994px;width:10.2px;height:10.2px;border-radius:50%;background:#fcdfe0"></div>
<svg class="ab" style="left:131.9px;top:445.09999999999997px" width="5" height="5" viewBox="0 0 5 5"><path d="M1 1L4 4M4 1L1 4" stroke="#c84459" stroke-width="0.95" fill="none"/></svg>
<div class="t" style="left:153.3px;top:442.60px;font-size:6.8px;color:#5f6679;">7</div>
<div class="t" style="left:163.1px;top:442.60px;font-size:6.83px;color:#5f6679;">Slalombackning</div>
<div class="t" style="left:369.1px;top:442.60px;font-size:6.8px;color:#5f6679;">28 nov.</div>
<div class="t" style="left:418.8px;top:442.60px;font-size:6.8px;color:#5f6679;">1 tim 52 min</div>
<svg class="ab" style="left:471.6px;top:443.09999999999997px" width="9" height="9" viewBox="0 0 9 9"><circle cx="4.5" cy="4.5" r="3.5" stroke="#565d70" stroke-width="0.9" fill="none"/><path d="M1.4 3.7Q4.5 2.6 7.6 3.7L5.6 6.9Q4.5 7.6 3.4 6.9Z" fill="#565d70"/><circle cx="4.5" cy="4.6" r="0.75" fill="#eef1f6"/></svg>
<div class="t" style="left:484.2px;top:442.60px;font-size:6.8px;color:#5f6679;">0 / 21</div>
<div class="ab" style="left:567.1px;top:440.2px;width:31px;height:13.8px;border-radius:7px;background:#fff"></div>
<svg class="ab" style="left:574px;top:443.79999999999995px" width="8" height="7" viewBox="0 0 8 7"><path d="M4 0.6L7.5 6.5H0.5Z" fill="#f0a52a"/><path d="M4 2.6v2" stroke="#fff" stroke-width="0.8"/><circle cx="4" cy="5.5" r="0.4" fill="#fff"/></svg>
<div class="t" style="left:584.4px;top:442.60px;font-size:6.5px;color:#5f6679;">15</div>
</body></html>
